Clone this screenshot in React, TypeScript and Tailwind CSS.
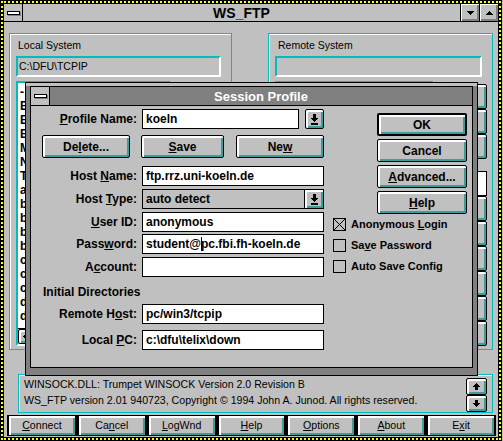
import React from "react";

const FONT = "font-['Liberation_Sans',Arial,sans-serif]";

function Btn({ children, className = "" }: { children?: React.ReactNode; className?: string }) {
  return (
    <div
      className={
        "flex items-center justify-center border-black rounded-[2px] bg-[#c0c0c0] shadow-[inset_2px_2px_0_#ffffff,inset_-2px_-2px_0_#3a9e9e] " +
        className
      }
    >
      {children}
    </div>
  );
}

function ComboArrow() {
  return (
    <svg width="7" height="11" viewBox="0 0 7 11" shapeRendering="crispEdges">
      <rect x="2" y="0" width="3" height="4" fill="#000" />
      <rect x="0" y="4" width="7" height="1" fill="#000" />
      <rect x="1" y="5" width="5" height="1" fill="#000" />
      <rect x="2" y="6" width="3" height="1" fill="#000" />
      <rect x="3" y="7" width="1" height="1" fill="#000" />
      <rect x="0" y="9" width="7" height="2" fill="#000" />
    </svg>
  );
}

function StemArrow({ dir }: { dir: "up" | "down" | "left" }) {
  if (dir === "left") {
    return (
      <svg width="7" height="7" viewBox="0 0 7 7" shapeRendering="crispEdges">
        <rect x="0" y="3" width="1" height="1" fill="#000" />
        <rect x="1" y="2" width="1" height="3" fill="#000" />
        <rect x="2" y="1" width="1" height="5" fill="#000" />
        <rect x="3" y="0" width="1" height="7" fill="#000" />
        <rect x="4" y="2" width="3" height="3" fill="#000" />
      </svg>
    );
  }
  return (
    <svg
      width="7"
      height="7"
      viewBox="0 0 7 7"
      shapeRendering="crispEdges"
      style={dir === "down" ? { transform: "scaleY(-1)" } : undefined}
    >
      <rect x="3" y="0" width="1" height="1" fill="#000" />
      <rect x="2" y="1" width="3" height="1" fill="#000" />
      <rect x="1" y="2" width="5" height="1" fill="#000" />
      <rect x="0" y="3" width="7" height="1" fill="#000" />
      <rect x="2" y="4" width="3" height="3" fill="#000" />
    </svg>
  );
}

function Tri({ dir }: { dir: "up" | "down" }) {
  return (
    <svg
      width="7"
      height="4"
      viewBox="0 0 7 4"
      shapeRendering="crispEdges"
      style={dir === "up" ? { transform: "scaleY(-1)" } : undefined}
    >
      <rect x="0" y="0" width="7" height="1" fill="#000" />
      <rect x="1" y="1" width="5" height="1" fill="#000" />
      <rect x="2" y="2" width="3" height="1" fill="#000" />
      <rect x="3" y="3" width="1" height="1" fill="#000" />
    </svg>
  );
}

function SysMenu() {
  return <div className="w-[13px] h-[4px] bg-white border border-black shadow-[1px_1px_0_#808080]" />;
}

function Label({ children }: { children: React.ReactNode }) {
  return <div className="w-[106px] text-right text-[12px] font-bold leading-none whitespace-nowrap">{children}</div>;
}

function Field({ children, className = "" }: { children?: React.ReactNode; className?: string }) {
  return (
    <div
      className={
        "ml-[5px] h-[20px] border border-black bg-white flex items-center pl-[3px] text-[12px] font-bold whitespace-nowrap overflow-hidden " +
        className
      }
    >
      {children}
    </div>
  );
}

function Check({ checked, children }: { checked?: boolean; children: React.ReactNode }) {
  return (
    <div className="flex items-center h-[14px]">
      <div className="w-[13px] h-[13px] border border-black bg-[#c0c0c0] flex items-center justify-center">
        {checked && (
          <svg width="11" height="11" viewBox="0 0 11 11">
            <path d="M0 0L11 11M11 0L0 11" stroke="#000" strokeWidth="1" />
          </svg>
        )}
      </div>
      <div className="ml-[5px] text-[11px] font-bold leading-none whitespace-nowrap">{children}</div>
    </div>
  );
}

function GroupBox({
  title,
  path,
  side,
}: {
  title: string;
  path: string;
  side: "local" | "remote";
}) {
  const localItems = ["-", "B", "E", "E", "M", "N", "T", "a", "b", "b", "b", "b", "c", "c", "c", "d", "d"];
  return (
    <div
      className={
        "h-[317px] border border-[#00bcbc] shadow-[inset_1px_1px_0_#ffffff] flex flex-col " +
        (side === "local" ? "w-[223px] pl-[6px]" : "w-[225px] pl-[6px]")
      }
    >
      <div className={"mt-[5px] text-[10.5px] leading-[12px] " + (side === "local" ? "pl-[2px]" : "pl-[3px]")}>
        {title}
      </div>
      <div
        className={
          "mt-[5px] h-[21px] border-2 border-t-[#00bcbc] border-l-[#00bcbc] border-b-white border-r-white flex items-center pl-[1px] text-[10.5px] " +
          (side === "local" ? "w-[205px]" : "w-[207px]")
        }
      >
        {path}
      </div>
      <div className="mt-[4px] h-[265px] flex">
        <div
          className={
            "h-full bg-white border-2 border-t-[#00bcbc] border-l-[#00bcbc] border-b-white border-r-white flex flex-col " +
            (side === "local" ? "w-[155px]" : "w-[159px]")
          }
        >
          <div className="flex-1 overflow-hidden pl-[2px] pt-[2px] text-[12px] font-bold leading-[14px]">
            {side === "local" && localItems.map((t, i) => <div key={i}>{t}</div>)}
          </div>
          <div className="h-[16px] flex bg-[#c0c0c0] border-t border-black">
            <Btn className="border w-[16px] h-full">
              <StemArrow dir="left" />
            </Btn>
          </div>
        </div>
        <div className="ml-[4px] w-[49px] flex flex-col pt-[3px]">
          <Btn className="border h-[25px]" />
          <Btn className="border h-[25px]" />
          <Btn className="border h-[25px]" />
          <div className="mt-[12px] h-[25px] bg-white border border-black" />
          <Btn className="border h-[25px]" />
          <Btn className="border h-[25px]" />
          <Btn className="border h-[25px]" />
          <Btn className="border h-[25px]" />
          <Btn className="border h-[25px]" />
          <Btn className="border h-[25px]" />
        </div>
      </div>
    </div>
  );
}

function SessionDialog() {
  return (
    <div className="absolute left-[25px] top-[82px] w-[453px] h-[294px] border border-black bg-[#808080] px-[4px] pt-[3px] pb-[7px] shadow-[inset_0_3px_0_#c0c0c0]">
      <div className="h-full border border-black flex flex-col bg-[#c0c0c0]">
        <div className="h-[19px] shrink-0 flex border-b border-black bg-[#808080]">
          <div className="w-[19px] border-r border-black bg-[#c0c0c0] flex items-center justify-center">
            <SysMenu />
          </div>
          <div className="flex-1 flex items-center justify-center text-white text-[13px] font-bold leading-none">
            Session Profile
          </div>
        </div>
        <div className="flex-1 flex text-black">
          <div className="w-[293px] flex flex-col pt-[3px]">
            <div className="flex items-center h-[20px]">
              <Label>
                <u>P</u>rofile Name:
              </Label>
              <Field className="w-[157px]">koeln</Field>
              <Btn className="border ml-[6px] w-[19px] h-[20px]">
                <ComboArrow />
              </Btn>
            </div>
            <div className="flex mt-[6px] h-[23px] text-[12px] font-bold">
              <Btn className="border ml-[11px] w-[88px] h-full">
                <span>
                  De<u>l</u>ete...
                </span>
              </Btn>
              <Btn className="border ml-[11px] w-[83px] h-full">
                <span>
                  <u>S</u>ave
                </span>
              </Btn>
              <Btn className="border ml-[12px] w-[88px] h-full">
                <span>
                  Ne<u>w</u>
                </span>
              </Btn>
            </div>
            <div className="flex items-center mt-[8px] h-[20px]">
              <Label>
                Host <u>N</u>ame:
              </Label>
              <Field className="w-[182px]">ftp.rrz.uni-koeln.de</Field>
            </div>
            <div className="flex items-center mt-[3px] h-[20px]">
              <Label>
                Host <u>T</u>ype:
              </Label>
              <div className="ml-[5px] w-[182px] h-[20px] border border-black bg-[#c0c0c0] flex text-[12px] font-bold">
                <div className="flex-1 flex items-center pl-[3px]">auto detect</div>
                <div className="w-[19px] border-l border-black flex items-center justify-center shadow-[inset_2px_2px_0_#ffffff,inset_-2px_-2px_0_#3a9e9e]">
                  <ComboArrow />
                </div>
              </div>
            </div>
            <div className="flex items-center mt-[3px] h-[20px]">
              <Label>
                <u>U</u>ser ID:
              </Label>
              <Field className="w-[182px]">anonymous</Field>
            </div>
            <div className="flex items-center mt-[2px] h-[20px]">
              <Label>
                Pass<u>w</u>ord:
              </Label>
              <Field className="w-[182px]">
                student@
                <span className="inline-block w-[1px] h-[14px] bg-black -mr-[1px]" />
                pc.fbi.fh-koeln.de
              </Field>
            </div>
            <div className="flex items-center mt-[3px] h-[20px]">
              <Label>
                A<u>c</u>count:
              </Label>
              <Field className="w-[182px]" />
            </div>
            <div className="mt-[8px] h-[14px] ml-[12px] flex items-center text-[12px] font-bold leading-none">
              Initial Directories
            </div>
            <div className="flex items-center mt-[5px] h-[20px]">
              <Label>
                Remote H<u>o</u>st:
              </Label>
              <Field className="w-[182px]">pc/win3/tcpip</Field>
            </div>
            <div className="flex items-center mt-[6px] h-[20px]">
              <Label>
                Local <u>P</u>C:
              </Label>
              <Field className="w-[182px]">c:\dfu\telix\down</Field>
            </div>
          </div>
          <div className="flex flex-col pl-[9px]">
            <div className="ml-[44px] w-[90px] flex flex-col text-[12px] font-bold">
              <Btn className="border-2 mt-[7px] h-[23px]">OK</Btn>
              <Btn className="border mt-[3px] h-[23px]">Cancel</Btn>
              <Btn className="border mt-[3px] h-[23px]">
                <span>
                  <u>A</u>dvanced...
                </span>
              </Btn>
              <Btn className="border mt-[3px] h-[23px]">
                <span>
                  <u>H</u>elp
                </span>
              </Btn>
            </div>
            <div className="mt-[3px]">
              <Check checked>
                Anonymous <u>L</u>ogin
              </Check>
            </div>
            <div className="mt-[7px]">
              <Check>
                Sa<u>v</u>e Password
              </Check>
            </div>
            <div className="mt-[7px]">
              <Check>Auto Save Config</Check>
            </div>
          </div>
        </div>
      </div>
    </div>
  );
}

export default function App() {
  const bottom: React.ReactNode[] = [
    <span>
      <u>C</u>onnect
    </span>,
    <span>
      Ca<u>n</u>cel
    </span>,
    <span>
      <u>L</u>ogWnd
    </span>,
    <span>
      <u>H</u>elp
    </span>,
    <span>
      <u>O</u>ptions
    </span>,
    <span>
      <u>A</u>bout
    </span>,
    <span>
      E<u>x</u>it
    </span>,
  ];
  return (
    <div className={"w-[503px] h-[441px] bg-[#c0c0c0] relative overflow-hidden text-black " + FONT}>
      <div className="w-[502px] h-[441px] border border-black">
        <div className="h-full border-2 border-dotted border-[#ffff00] bg-black">
          <div className="h-full border border-black bg-[#c0c0c0] flex flex-col">
            <div className="h-[18px] shrink-0 flex border-b border-black">
              <div className="w-[19px] border-r border-black flex items-center justify-center">
                <SysMenu />
              </div>
              <div className="flex-1 flex items-center justify-center text-[14px] font-bold leading-none">WS_FTP</div>
              <div className="w-[19px] border-l border-black flex items-center justify-center shadow-[inset_1px_1px_0_#ffffff,inset_-2px_-2px_0_#808080]">
                <Tri dir="down" />
              </div>
              <div className="w-[19px] border-l border-black flex items-center justify-center shadow-[inset_1px_1px_0_#ffffff,inset_-2px_-2px_0_#808080]">
                <Tri dir="up" />
              </div>
            </div>
            <div className="flex-1 flex flex-col">
              <div className="mt-[11px] ml-[5px] flex gap-[36px]">
                <GroupBox title="Local System" path="C:\DFU\TCPIP" side="local" />
                <GroupBox title="Remote System" path="" side="remote" />
              </div>
              <div className="mt-[24px] ml-[14px] w-[475px] h-[39px] border border-[#00bcbc] shadow-[inset_1px_1px_0_#ffffff] flex">
                <div className="flex-1 pl-[5px] pt-[1px] text-[10.6px] leading-[16px] whitespace-nowrap">
                  <div>WINSOCK.DLL: Trumpet WINSOCK Version 2.0 Revision B</div>
                  <div>WS_FTP version 2.01 940723, Copyright © 1994 John A. Junod. All rights reserved.</div>
                </div>
                <div className="w-[21px] mr-[5px] pt-[3px] flex flex-col">
                  <Btn className="border h-[17px]">
                    <StemArrow dir="up" />
                  </Btn>
                  <Btn className="border h-[17px]">
                    <StemArrow dir="down" />
                  </Btn>
                </div>
              </div>
              <div className="mt-[2px] ml-[3px] w-[489px] h-[21px] flex text-[10.6px]">
                {bottom.map((b, i) => (
                  <Btn key={i} className="flex-1 border-y border-x-2 h-full rounded-none">
                    {b}
                  </Btn>
                ))}
              </div>
            </div>
          </div>
        </div>
      </div>
      <SessionDialog />
    </div>
  );
}
